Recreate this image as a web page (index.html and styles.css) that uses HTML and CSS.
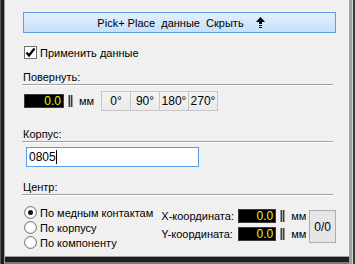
FILE: index.html
```html
<!DOCTYPE html>
<html lang="ru">
<head>
  <meta charset="UTF-8">
  <meta name="viewport" content="width=device-width, initial-scale=1.0">
  <title>Pick+Place</title>
  <link rel="stylesheet" href="styles.css">
</head>
<body>
  <div class="frame">

    <!-- Toggle button -->
    <button class="toggle">Pick+&nbsp;Place&nbsp;&nbsp;данные&nbsp;&nbsp;Скрыть
      <svg class="arrow" width="9" height="12" viewBox="0 0 9 12">
        <polygon points="4.5,0 9,5 0,5" fill="#000"/>
        <rect x="3" y="5" width="3" height="2" fill="#000"/>
        <rect x="3" y="8" width="3" height="1" fill="#000"/>
        <rect x="3" y="10" width="3" height="1" fill="#000"/>
      </svg>
    </button>

    <!-- Apply -->
    <label class="check-row">
      <svg class="checkbox" width="13" height="13" viewBox="0 0 13 13">
        <rect x="0.5" y="0.5" width="12" height="12" fill="#fff" stroke="#707070"/>
        <polyline points="2.5,6.5 5,9.5 10.5,2.5" fill="none" stroke="#000" stroke-width="2.2"/>
      </svg>
      <span>Применить данные</span>
    </label>

    <!-- Rotate -->
    <div class="group-label first">Повернуть:</div>
    <div class="sep"></div>
    <div class="rotate-row">
      <div class="num">0.0</div>
      <div class="spin"></div>
      <span class="unit">мм</span>
      <div class="angles">
        <button class="angle">0°</button>
        <button class="angle">90°</button>
        <button class="angle">180°</button>
        <button class="angle">270°</button>
      </div>
    </div>

    <!-- Package -->
    <div class="group-label pkg">Корпус:</div>
    <div class="sep"></div>
    <div class="text-input">0805<span class="caret"></span></div>

    <!-- Center -->
    <div class="group-label center">Центр:</div>
    <div class="sep"></div>
    <div class="center-row">
      <div class="radios">
        <div class="radio-row"><span class="radio on"></span>По медным контактам</div>
        <div class="radio-row"><span class="radio"></span>По корпусу</div>
        <div class="radio-row"><span class="radio"></span>По компоненту</div>
      </div>
      <div class="coords">
        <div class="coord-row">
          <span class="coord-label">X-координата:</span>
          <div class="num small">0.0</div>
          <div class="spin"></div>
          <span class="unit">мм</span>
        </div>
        <div class="coord-row">
          <span class="coord-label">Y-координата:</span>
          <div class="num small">0.0</div>
          <div class="spin"></div>
          <span class="unit">мм</span>
        </div>
      </div>
      <button class="zero">0/0</button>
    </div>

  </div>
</body>
</html>
```

FILE: styles.css
```css
body {
  margin: 0;
  font-family: "Liberation Sans", Arial, sans-serif;
  font-size: 11px;
  color: #000;
}
.frame {
  width: 355px;
  height: 264px;
  box-sizing: border-box;
  padding: 12px 19px 0 23px;
  background: #f0f0f0;
  box-shadow:
    inset 1px 0 #5a5a5a,
    inset 4px 0 #1e1e1e,
    inset 5px 0 #a0a0a0,
    inset -2px 0 #3c3c3c,
    inset -3px 0 #d0d0d0,
    inset -6px 0 #a0a0a0,
    inset 0 -2px #7a7a7a,
    inset 0 -7px #1e1e1e,
    inset 0 -8px #a0a0a0;
}
button {
  font-family: inherit;
  font-size: 11px;
  color: #000;
  padding: 0;
  margin: 0;
  cursor: pointer;
}
.toggle {
  display: flex;
  align-items: center;
  justify-content: center;
  width: 313px;
  height: 21px;
  border: 1px solid #5b9ee6;
  background: linear-gradient(#e2effc, #c6e0fb);
  padding-left: 3px;
}
.arrow {
  margin-left: 12px;
}
.check-row {
  display: flex;
  align-items: center;
  height: 13px;
  margin-top: 13px;
  margin-left: 1px;
}
.checkbox {
  margin-right: 3px;
}
.group-label {
  height: 13px;
  line-height: 13px;
}
.group-label.first {
  margin-top: 12px;
}
.group-label.pkg {
  margin-top: 17px;
}
.group-label.center {
  margin-top: 14px;
}
.sep {
  height: 1px;
  margin: 0 3px 0 -1px;
  background: #a0a0a0;
  border-bottom: 1px solid #fff;
}
.rotate-row {
  display: flex;
  align-items: center;
  height: 20px;
  margin-top: 5px;
  margin-left: 1px;
}
.num {
  width: 40px;
  height: 14px;
  box-sizing: border-box;
  background: #000;
  border: 1px solid #3a3a3a;
  color: #e8f800;
  font-size: 12px;
  line-height: 12px;
  text-align: right;
  padding-right: 2px;
}
.num.small {
  width: 38px;
}
.spin {
  width: 5px;
  height: 12px;
  margin-left: 4px;
  background: linear-gradient(90deg, #9a9a9a 0 1px, #3c3c3c 1px 2px, #b0b0b0 2px 3px, #3c3c3c 3px 4px, #9a9a9a 4px);
}
.unit {
  margin-left: 6px;
  width: 11px;
}
.angles {
  display: flex;
  margin-left: 11px;
}
.angle {
  width: 30px;
  height: 20px;
  border: 1px solid #c6c6c6;
  margin-right: -1px;
  background: linear-gradient(#f4f4f4, #ebebeb);
  font-size: 12px;
}
.text-input {
  display: flex;
  align-items: center;
  width: 173px;
  height: 20px;
  box-sizing: border-box;
  margin: 4px 0 0 3px;
  padding-left: 2px;
  border: 1px solid #569de5;
  background: #fff;
  font-size: 12px;
}
.caret {
  width: 1px;
  height: 14px;
  background: #000;
}
.center-row {
  display: flex;
  margin-top: 9px;
}
.radios {
  width: 140px;
}
.radio-row {
  display: flex;
  align-items: center;
  height: 15px;
  margin-left: 1px;
  white-space: nowrap;
}
.radio {
  width: 11px;
  height: 11px;
  border: 1px solid #7a7a7a;
  border-radius: 50%;
  background: #fff;
  margin-right: 3px;
  position: relative;
  box-shadow: inset 0 0 0 1px #e6e6e6;
}
.radio.on::after {
  content: "";
  position: absolute;
  left: 3px;
  top: 3px;
  width: 5px;
  height: 5px;
  border-radius: 50%;
  background: #111;
}
.coords {
  margin-top: 4px;
}
.coord-row {
  display: flex;
  align-items: center;
  height: 14px;
  margin-bottom: 4px;
}
.coord-label {
  width: 77px;
}
.zero {
  width: 27px;
  height: 33px;
  margin: 5px 0 0 7px;
  border: 1px solid #adadad;
  background: #e6e6e6;
  font-size: 12px;
}
```
